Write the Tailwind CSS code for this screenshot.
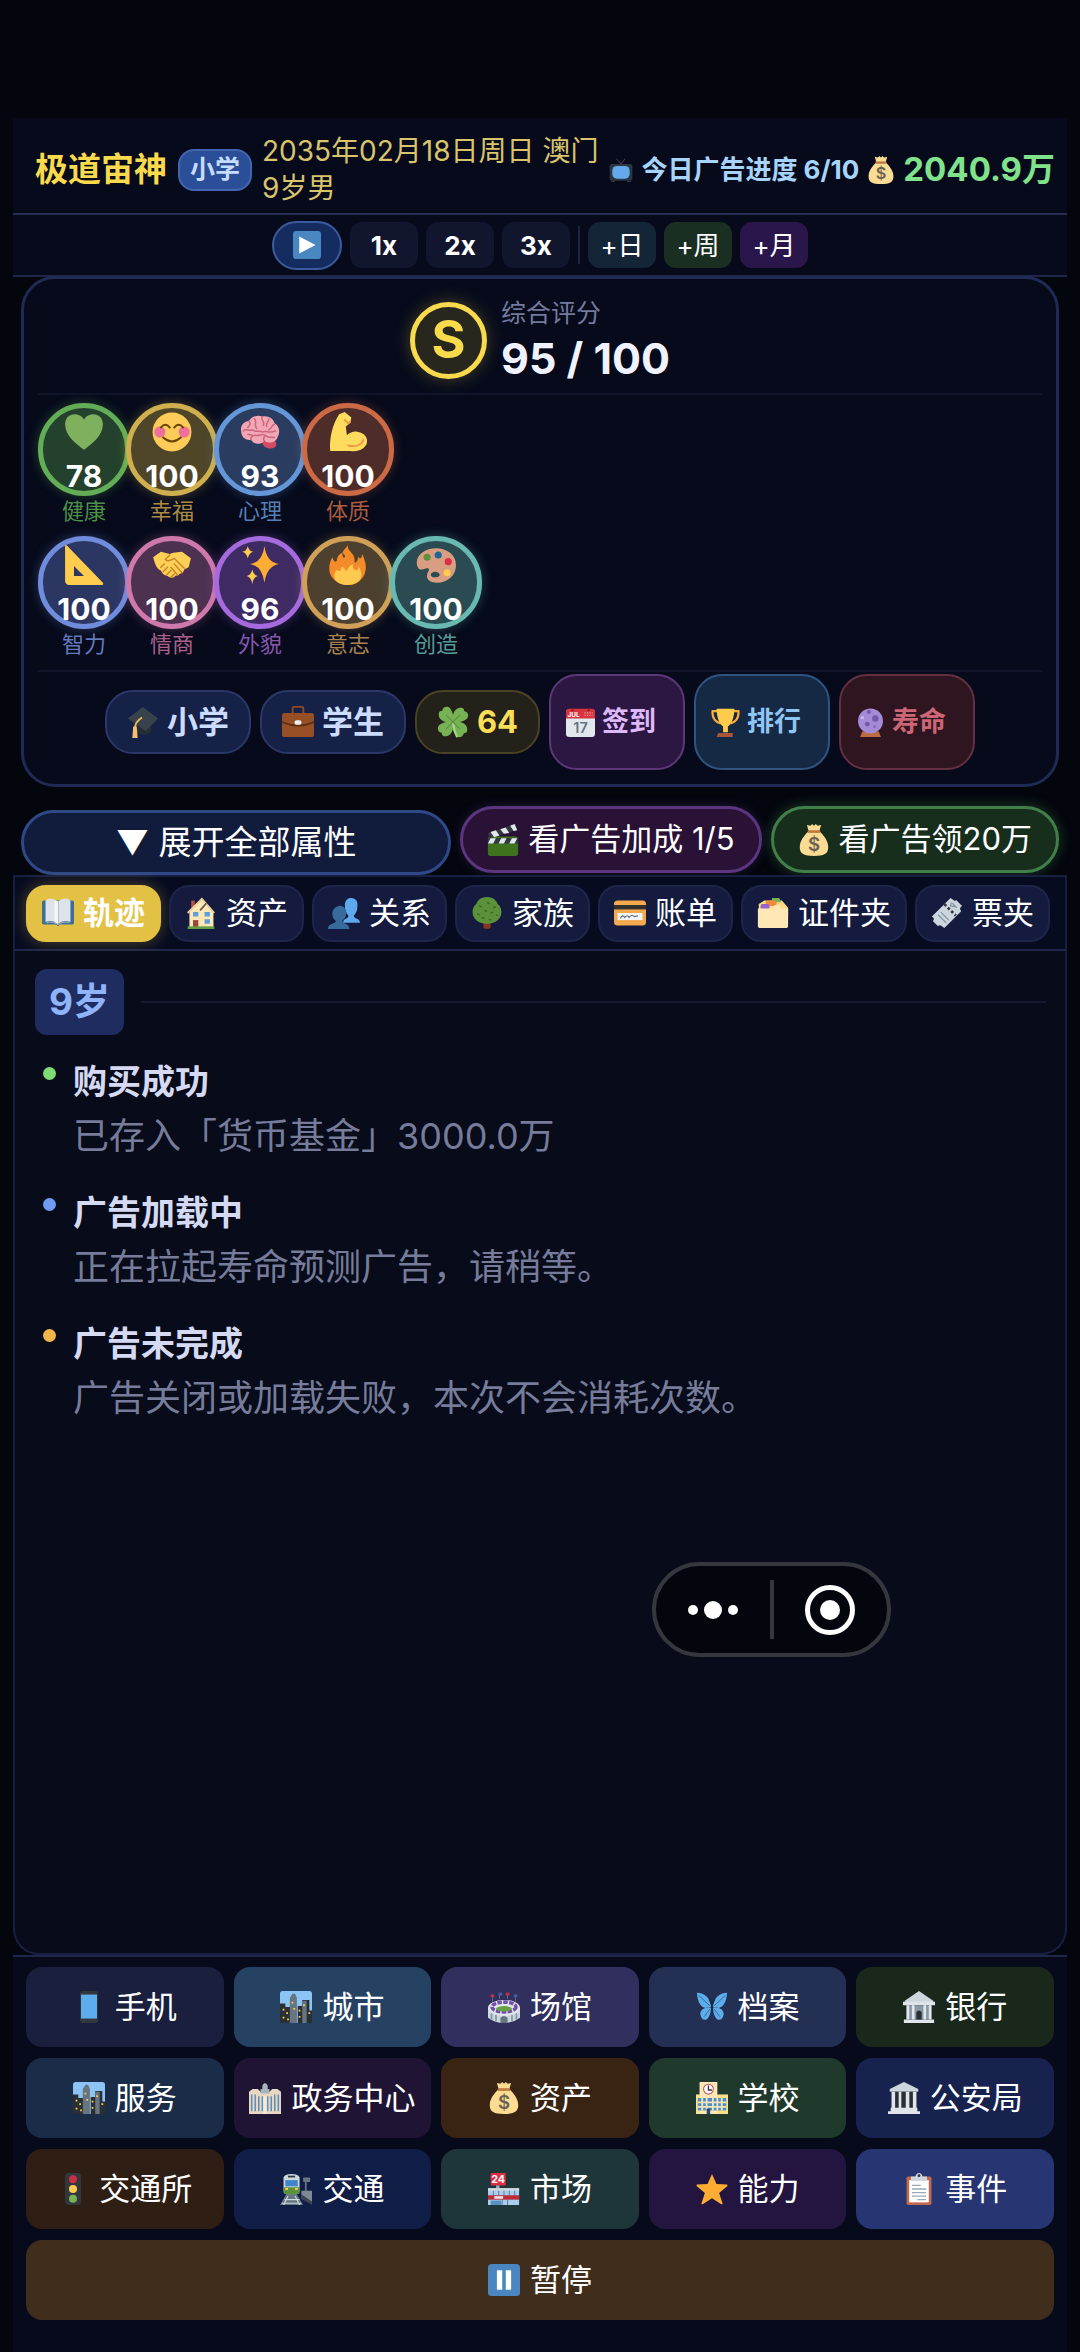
<!DOCTYPE html>
<html lang="zh-CN">
<head>
    <meta charset="UTF-8">
    <meta name="viewport" content="width=device-width, initial-scale=1.0">
    <title>人生模拟</title>
    <script src="https://cdn.jsdelivr.net/npm/@tailwindcss/browser@4"></script>
</head>
<body class="bg-[#03060d] text-white font-[Inter,'Noto_Sans_CJK_SC',sans-serif] whitespace-nowrap">

    <!-- icon sprites -->
    <svg class="hidden" xmlns="http://www.w3.org/2000/svg">
        <symbol id="i-play" viewBox="0 0 36 36"><rect width="36" height="36" rx="4" fill="#4a86c0"/><path d="M8 7v22l21-11z" fill="#fff"/></symbol>
        <symbol id="i-pause" viewBox="0 0 36 36"><rect width="36" height="36" rx="4" fill="#4a86c0"/><path d="M10 7h6v22h-6zM20 7h6v22h-6z" fill="#fff"/></symbol>
        <symbol id="i-tv" viewBox="0 0 36 36"><path d="M11 1l7 8 6-8" fill="none" stroke="#4a4350" stroke-width="1.5"/><rect x="1" y="9" width="34" height="25" rx="3" fill="#2b3640"/><path d="M3 34h6v2H3zM27 34h6v2h-6z" fill="#2b3640"/><rect x="5" y="12" width="26" height="19" rx="7" fill="#64a9ec"/></symbol>
        <symbol id="i-money" viewBox="0 0 36 36"><path d="M12 8L10 1l4 1 2-2 2 2 2-2 2 2 4-1-2 7c5 5 10 11 10 18 0 8-5 10-16 10S2 34 2 26C2 19 7 13 12 8z" fill="#fbdc92"/><path d="M11 7h14v3H11z" fill="#c07a3e"/><text x="18" y="30" text-anchor="middle" font-size="21" font-weight="600" fill="#6b6153">$</text></symbol>
        <symbol id="i-heart" viewBox="0 0 36 36"><path d="M18 34C10 28 1 21 1 11 1 5 5 2 9.500 2c4 0 7 2 8.500 5 1.500-3 4.500-5 8.500-5C31 2 35 5 35 11c0 10-9 17-17 23z" fill="#7fb05e"/></symbol>
        <symbol id="i-smile" viewBox="0 0 36 36"><circle cx="18" cy="18" r="17.500" fill="#fdcb58"/><circle cx="7" cy="18" r="5" fill="#ee6f9c"/><circle cx="29" cy="18" r="5" fill="#ee6f9c"/><path d="M8 14q4-5 8 0M20 14q4-5 8 0M10 23q8 7 16 0" fill="none" stroke="#664500" stroke-width="1.800" stroke-linecap="round"/></symbol>
        <symbol id="i-brain" viewBox="0 0 36 36"><path d="M20 27c0 5 8 8 12 4 2-2 0-6-3-6z" fill="#d34a62"/><path d="M1 17C0 11 5 8 8 8c3-5 9-5 12-4 6-1 10 2 11 6 5 3 5 9 3 12-1 5-7 7-12 4-4 4-10 3-12-1-5 1-9-3-9-8z" fill="#f3a6b4"/><path d="M8 8c2 2 1 4-1 6M13 6c3 3-1 5 2 9M20 4c-2 4 3 4 1 8M26 6c0 3-3 4-2 7M31 11c-3 1-2 4-5 5M3 17c3-3 5 1 8-1 3 3 6 0 9 2 4-2 6 2 12-1M10 25c-1-3 2-4 4-4 4 1 5-2 9 0 2 3 5 1 8 2M7 20c2 1 3 0 4 1M22 26c-2-2 0-4 1-5" fill="none" stroke="#c9667c" stroke-width="1.300" stroke-linecap="round"/></symbol>
        <symbol id="i-muscle" viewBox="0 0 36 36"><path d="M10 2l5-2 6 5-1 5-4 3 1 8c3-3 7-4 10-3 6 1 9 5 8 10-2 6-8 8-15 7H2C1 24 4 11 10 2z" fill="#ffdc5d"/><path d="M18 30c6 2 12 0 14-5M15 7l3 3 2-1" fill="none" stroke="#ef9645" stroke-width="1.600" stroke-linecap="round"/></symbol>
        <symbol id="i-ruler" viewBox="0 0 36 36"><path fill-rule="evenodd" d="M1 1q0-2 2 0l32 33q1 2-1 2H5q-4 0-4-4zM9 19v9h9z" fill="#ffcc4d"/></symbol>
        <symbol id="i-shake" viewBox="0 0 36 36"><path d="M1 11l7-5 8 2 3-1 8-1 8 6-2 8-4 2c-1 4-4 3-5 5-2 1-3 0-4 2-3 1-5 0-6-1-4-1-5-3-6-5-4-2-5-5-7-12z" fill="#ffcf56"/><path d="M16 9l-4 4c3 3 6 0 8-1l9 9M8 20l3-3M10 24l4-4M13 27l4-4M17 29l3-3M20 17l7 8M17 20l6 7" fill="none" stroke="#c7862c" stroke-width="1.300" stroke-linecap="round"/></symbol>
        <symbol id="i-spark" viewBox="0 0 36 36"><path d="M22 1q2 15 13 16-11 2-13 17-2-15-13-17Q20 16 22 1z" fill="#ffac33"/><path d="M7 1q1 5 5 5-4 1-5 6Q6 7 2 6q4 0 5-5zM11 22q1 5 5 6-4 1-5 7-1-6-5-7 4-1 5-6z" fill="#ffcc4d"/></symbol>
        <symbol id="i-fire" viewBox="0 0 36 36"><path d="M13 7c1-3 4-5 5-7-1 7 7 6 6 16 3-1 3-4 3-6 1 3 3 3 4-2 3 8 4 12 2 18-3 7-9 10-15 10S5 33 2 26C0 20 2 14 4 11c1 4 3 5 4 3 0-3 2-6 5-7 0 4 1 5 2 4 1-1 0-2-2-4z" fill="#f48b2b"/><path d="M12 20c3-1 4 5 5 3 1-3 3-5 6-6-2 4 1 5 3 6 2-1 1-3 1-4 7 9 1 17-9 17S2 29 8 22c2 3 4 1 4-2z" fill="#fdc94e"/></symbol>
        <symbol id="i-palette" viewBox="0 0 36 36"><path fill-rule="evenodd" d="M18 3c10 0 18 6 18 15 0 10-8 16-17 16-6 0-10-3-9-7 0-3 3-4 1-6-3-1-6 3-9 0C-3 11 7 3 18 3zM17 24c-6 1-4 6 1 5 5 0 4-5-1-5z" fill="#d99e82"/><circle cx="10" cy="11" r="3.200" fill="#5c913b"/><circle cx="20" cy="9" r="3.200" fill="#226699"/><circle cx="29" cy="15" r="3.200" fill="#dd2e44"/><circle cx="28" cy="25" r="3.200" fill="#ffcc4d"/></symbol>
        <symbol id="i-grad" viewBox="0 0 36 36"><path d="M8 18v10c5 5 14 6 19 1V17z" fill="#252e33"/><path d="M18 1l17 13-14 14L1 14z" fill="#37434a"/><path d="M17 13c-5 3-8 6-8 12" fill="none" stroke="#f6b75e" stroke-width="2"/><path d="M7 23h4l1 13H6z" fill="#f9bf70"/></symbol>
        <symbol id="i-case" viewBox="0 0 36 36"><path d="M12 9V3q0-2 2-2h8q2 0 2 2v6" fill="none" stroke="#8a4b25" stroke-width="2.200"/><rect y="8" width="36" height="27" rx="3" fill="#974f25"/><path d="M0 18q18 8 36 0" fill="none" stroke="#5d2e14" stroke-width="2"/><rect x="14" y="16" width="8" height="5" rx="2.500" fill="#eef1f3"/></symbol>
        <symbol id="i-clover" viewBox="0 0 36 36"><g fill="#77b255"><path id="lf" d="M18 18C9 20 1 15 2 9c0-4 3-3 4-4 1-5 7-5 9-2 3 4 4 9 3 15z"/><use href="#lf" transform="rotate(90 18 18)"/><use href="#lf" transform="rotate(180 18 18)"/><use href="#lf" transform="rotate(270 18 18)"/></g><path d="M18 18c1 6 1 11 5 17" fill="none" stroke="#a6d388" stroke-width="2.500"/><path d="M10 10l16 16M26 10L10 26" stroke="#5c9140" stroke-width="1.200"/></symbol>
        <symbol id="i-cal" viewBox="0 0 36 36"><rect y="2" width="36" height="34" rx="4" fill="#e1e8ed"/><path d="M0 13V5q0-4 4-4h28q4 0 4 4v8z" fill="#d8343f"/><text x="2" y="11" font-size="8" font-weight="700" fill="#fff">JUL</text><path d="M23 6h10M23 9h10" stroke="#f7a0a6" stroke-dasharray="1.500 1.500" stroke-width="1.500"/><path d="M8 0v4M28 0v4" stroke="#8c1f27" stroke-width="2"/><text x="18" y="31" text-anchor="middle" font-size="18" font-weight="600" fill="#66757f">17</text></symbol>
        <symbol id="i-cup" viewBox="0 0 36 36"><path d="M9 4H2c-1 9 4 14 10 15M27 4h7c1 9-4 14-10 15" fill="none" stroke="#ffac33" stroke-width="2.800"/><path d="M7 1h22c0 10-3 19-8 22v7h-6v-7C10 20 7 11 7 1z" fill="#ffcc4d"/><path d="M9 31h18v5H7z" fill="#a8553a"/></symbol>
        <symbol id="i-orb" viewBox="0 0 36 36"><path d="M8 29h20l3 7H5z" fill="#bd6a41"/><circle cx="18" cy="16" r="15.500" fill="#a58ad8"/><circle cx="24" cy="13" r="4" fill="#7459ab"/><circle cx="14" cy="20" r="3" fill="#7459ab"/><circle cx="16" cy="5" r="2.500" fill="#7459ab"/><circle cx="23" cy="23" r="2" fill="#8a6fc2"/><circle cx="8" cy="12" r="2" fill="#cbb8ef"/></symbol>
        <symbol id="i-clap" viewBox="0 0 36 36"><rect x="1" y="14" width="34" height="22" rx="3" fill="#3e721d"/><path d="M1 16h34v6H1z" fill="#31373d"/><path d="M1 10L32 0l2 7L3 16z" fill="#31373d"/><path d="M4 9l6-2 4 6-6 2zM15 6l6-2 4 6-6 1zM26 2l5-2 3 7-4 1zM4 16h6l-3 6H1zM16 16h6l-3 6h-6zM28 16h6l-3 6h-6z" fill="#e1e8ed"/></symbol>
        <symbol id="i-book" viewBox="0 0 36 36"><path d="M0 6q0-2 2-2h32q2 0 2 2v23q0 2-2 2H20l-2 2-2-2H2q-2 0-2-2z" fill="#3b6f96"/><path d="M18 5Q10-1 4 4v24q8-3 14 2 6-5 14-2V4q-6-5-14 1z" fill="#dde3e8"/><path d="M18 5v25M5 29q7-2 13 2 6-4 13-2" fill="none" stroke="#99a5b0" stroke-width="1.300"/><path d="M14 4q3 0 4 1v25q-2-1-4-2z" fill="#f3f5f7"/></symbol>
        <symbol id="i-house" viewBox="0 0 36 36"><path d="M7 4h4v10H7z" fill="#b4533f"/><path d="M5 16L19 2l13 14v18H5z" fill="#ffe8b6"/><path d="M3 18L19 2l14 16" fill="none" stroke="#e7cf9c" stroke-width="2"/><path d="M17 15l7-8" stroke="#66584a" stroke-width="2"/><path d="M9 17h6v5H9zM22 17h6v5h-6zM22 25h6v5h-6z" fill="#5c9fdc"/><path d="M9 26h6v8H9z" fill="#9c4637"/><path d="M3 33h30v3H3z" fill="#669e45"/></symbol>
        <symbol id="i-users" viewBox="0 0 36 36"><path d="M17 29c0-6 6-4 6-8-3-3-4-7-4-12 0-6 4-8 7-8 6 0 8 5 7 10 0 4-1 7-4 10 0 4 7 2 7 8z" fill="#5ea9ee"/><path d="M0 36c0-7 8-5 9-9-6-4-6-15 3-17 10-1 11 12 4 17 1 4 8 2 8 9z" fill="#366b9c"/></symbol>
        <symbol id="i-tree" viewBox="0 0 36 36"><path d="M14 27h8v8q-4 2-8 0z" fill="#8a3426"/><path d="M18 0c8 0 11 5 12 8 8 6 5 22-12 22S-2 14 6 8c1-3 4-8 12-8z" fill="#5c913b"/><path d="M9 10l3 1M18 6l3 2M25 12l3-1M7 19l3 1M15 15l3 1M22 18l3-1M12 24l3-1M20 25l3 1M28 20l2 1" stroke="#3c6b24" stroke-width="1.700"/></symbol>
        <symbol id="i-card" viewBox="0 0 36 36"><rect y="4" width="36" height="28" rx="4" fill="#f4a94f"/><path d="M0 9h36v5H0z" fill="#33302e"/><path d="M4 18h28v8H4z" fill="#f2f4f5"/><path d="M7 24q3-5 5-1 3-4 5 0 3-4 6-1l4-1" fill="none" stroke="#5f6d78" stroke-width="1.200"/></symbol>
        <symbol id="i-files" viewBox="0 0 36 36"><path d="M2 8l6-4h20l7 8v10H2z" fill="#ffd983"/><path d="M17 1h8l2 5H16z" fill="#77b255"/><rect x="10" y="4" width="12" height="6" rx="2" fill="#ef8b3e"/><rect x="4" y="8" width="10" height="6" rx="2" fill="#9266cc"/><path d="M1 13h16l3-4h5l2 4h8v20q0 2-2 2H3q-2 0-2-2z" fill="#ffe8b6"/></symbol>
        <symbol id="i-ticket" viewBox="0 0 36 36"><path d="M1 22L22 1l4 3q2 1 2-1l7 7q-4 2-1 6L15 35l-4-3q-2-1-3 1l-6-6q3-2-1-5z" fill="#ccd6dd"/><path d="M15 8l13 13" stroke="#31373d" stroke-width="3" stroke-dasharray="3 2.500"/><path d="M8 20l9 9M11 17l9 9M24 7l5 5M23 6l-1 4 5 1" stroke="#8899a6" stroke-width="1.500" fill="none"/></symbol>
        <symbol id="i-phone" viewBox="0 0 36 36"><rect x="8" y="0" width="20" height="36" rx="2.500" fill="#31373d"/><path d="M9 4h18v27H9z" fill="#5dadec"/></symbol>
        <symbol id="i-city" viewBox="0 0 36 36"><rect width="36" height="36" rx="3" fill="#8cc4f5"/><path d="M0 14h6v4h6v18H0zM20 17h5v-7h8v12h3v14H20z" fill="#292f33"/><path d="M11 8l3-5h3l2 5v28h-8zM25 11h5v25h-5z" fill="#66757f"/><path d="M3 20h2v2H3zM7 24h2v2H7zM3 29h2v2H3zM8 31h2v2H8zM21 21h2v2h-2zM21 28h2v2h-2zM32 24h2v2h-2zM13 12h2v2h-2zM15 19h2v2h-2zM26 15h2v2h-2z" fill="#ffcc4d"/></symbol>
        <symbol id="i-stadium" viewBox="0 0 36 36"><path d="M5 4v8M13 2v7M22 2v7M31 4v8" stroke="#66757f" stroke-width="1"/><path d="M3 4h4v3H3zM20 2h4v3h-4z" fill="#be3146"/><path d="M12 2h4v3h-4zM29 4h4v3h-4z" fill="#3d5fa8"/><path d="M0 19v11q8 6 18 6t18-6V19z" fill="#ccd6dd"/><ellipse cx="18" cy="19" rx="18" ry="9" fill="#e1e8ed"/><ellipse cx="18" cy="18" rx="13.500" ry="5.500" fill="none" stroke="#744eaa" stroke-width="4" stroke-dasharray="5 1.500"/><ellipse cx="18" cy="20" rx="9" ry="3" fill="#67a044"/><path d="M4 25v7M9 27v7M27 27v7M32 25v7" stroke="#8899a6" stroke-width="2"/><path d="M14 36v-6q4-4 8 0v6z" fill="#66757f"/></symbol>
        <symbol id="i-fly" viewBox="0 0 36 36"><path d="M17 18C8 22 2 16 1 2c9 0 15 6 16 16zM19 18c9 4 15-2 16-16-9 0-15 6-16 16zM17 19c-8-2-13 3-12 8 2 9 11 7 12-8zM19 19c8-2 13 3 12 8-2 9-11 7-12-8z" fill="#5dadec"/><path d="M3 5l13 12M33 5L20 17M9 29l7-9M27 29l-7-9" stroke="#2a6797" stroke-width="1"/><path d="M15 9l3 7 3-7M18 15v9" stroke="#20262b" stroke-width="1.400" fill="none"/></symbol>
        <symbol id="i-bank" viewBox="0 0 36 36"><path d="M18 0l16 11v4H2v-4z" fill="#ccd6dd"/><path d="M0 12h36v4H0zM1 32h34v4H1z" fill="#dfe5ea"/><path d="M4 16h28v16H4z" fill="#8a99a6"/><path d="M4 16h3v16H4zM10 16h3v16h-3zM23 16h3v16h-3zM29 16h3v16h-3z" fill="#e1e8ed"/><path d="M15 32v-8q3-4 6 0v8z" fill="#292f33"/></symbol>
        <symbol id="i-court" viewBox="0 0 36 36"><path d="M18 0l16 8v3H2V8z" fill="#ccd6dd"/><path d="M4 11h28v19H4z" fill="#292f33"/><path d="M4 11h4v19H4zM12 11h3v19h-3zM20 11h4v19h-4zM28 11h4v19h-4z" fill="#dfe5ea"/><path d="M3 29h30v4H3zM0 33h36v3H0z" fill="#dfe5ea"/></symbol>
        <symbol id="i-gov" viewBox="0 0 36 36"><path d="M0 11l4-3h6l3 3h10l3-3h6l4 3v25H0z" fill="#e8d8c3"/><path d="M13 8h2V4q3-6 6 0v4h2v5H13z" fill="#a9b4bd"/><path d="M3 14v19M7 14v19M11 16v17M15 16v17M21 16v17M25 16v17M29 14v19M33 14v19" stroke="#5c8fb8" stroke-width="1.700"/><path d="M16 16h4v20h-4z" fill="#f4eadb"/></symbol>
        <symbol id="i-school" viewBox="0 0 36 36"><path d="M0 14h36v22H0z" fill="#ffe08a"/><path d="M4 0h20v36H4z" fill="#ffe8b6"/><path d="M2 18h32v14H2z" fill="#4f8fc9"/><path d="M2 23h32M2 28h32M7 18v14M12 18v14M19 18v14M24 18v14M29 18v14" stroke="#f3e5bb" stroke-width="2"/><circle cx="14" cy="8" r="5.500" fill="#fff" stroke="#be5668" stroke-width="1.200"/><path d="M14 4v5h4" fill="none" stroke="#4b2e35" stroke-width="1.500"/><path d="M12 30h4v6h-4z" fill="#274c6d"/></symbol>
        <symbol id="i-light" viewBox="0 0 36 36"><rect x="9" width="18" height="36" rx="4" fill="#31373d"/><circle cx="18" cy="7" r="4.500" fill="#c93044"/><circle cx="18" cy="18" r="4.500" fill="#ffcc4d"/><circle cx="18" cy="29" r="4.500" fill="#77b255"/></symbol>
        <symbol id="i-train" viewBox="0 0 36 36"><path d="M29 9v13" stroke="#66757f" stroke-width="2"/><rect x="26" y="5" width="8" height="5" rx="1" fill="#66757f"/><path d="M24 20h12v14L24 29z" fill="#7d8a95"/><path d="M24 24l12 8v4L24 29z" fill="#3b454c"/><path d="M7 24L0 36h26l-7-12z" fill="#66757f"/><path d="M5 30h17M2 34h22M9 26l-5 10M17 26l5 10" stroke="#ccd6dd" stroke-width="1.300"/><path d="M4 5q1-4 9-4t9 4v15q0 4-4 4H8q-4 0-4-4z" fill="#ccd6dd"/><path d="M6 8h14v7H6z" fill="#3f86c8"/><path d="M4 16h18v5q0 3-4 3H8q-4 0-4-3z" fill="#5c913b"/><path d="M6 17h3v2H6zM17 17h3v2h-3z" fill="#ffcc4d"/><path d="M9 3h8v2H9z" fill="#31373d"/></symbol>
        <symbol id="i-store" viewBox="0 0 36 36"><rect x="3" width="17" height="14" rx="1" fill="#dd2e44"/><text x="11.500" y="11.500" text-anchor="middle" font-size="12" font-weight="700" fill="#fff">24</text><path d="M9 14h4v4H9z" fill="#99aab5"/><path d="M0 17h35v19H0z" fill="#a9cdeb"/><path d="M0 17h35v3H0z" fill="#ccd6dd"/><path d="M6 20v5M12 20v5M18 20v5M24 20v5M30 20v5M16 30v6M22 30v6" stroke="#5d83a6" stroke-width="1.200"/><path d="M0 25h35v5H0z" fill="#be2b3e"/><path d="M7 26h10v3H7z" fill="#f2dfe1"/><path d="M3 31h12v5H3z" fill="#5c8fc0"/></symbol>
        <symbol id="i-star" viewBox="0 0 36 36"><path d="M18 1l5 11.500 12 .5q1 1 0 2l-9 7.500 4 12q-1 1-2 0.500L18 28.500 8 35q-1 .5-2-.5l4-12L1 15q-1-1 0-2l12-.5z" fill="#ffac33"/></symbol>
        <symbol id="i-clip" viewBox="0 0 36 36"><rect x="4" y="4" width="28" height="32" rx="2" fill="#c1694f"/><path d="M7 8h22v25H7z" fill="#fff"/><path d="M9 4h5q1-4 4-4t4 4h5v5H9z" fill="#ccd6dd"/><circle cx="18" cy="3" r="1.600" fill="#31373d"/><path d="M10 14h10M10 18h16M10 22h16M10 26h16M16 30h10" stroke="#99a9b5" stroke-width="1.500"/></symbol>
    </svg>

    <div class="min-h-screen flex flex-col px-[13px] pt-[118px]">

        <!-- status bar -->
        <header class="h-[97px] shrink-0 flex items-center bg-[#070a1b] border-b-2 border-[#272c50] pl-[22px] pr-3 pt-2">
            <h1 class="text-[33px] font-bold text-[#f8da4c]">极道宙神</h1>
            <span class="ml-[11px] h-[42px] px-[10px] flex items-center rounded-2xl border-2 border-[#4465b0] bg-[#2b4e98] text-[25px] font-bold text-[#c5dcff]">小学</span>
            <p class="ml-[10px] flex-1 text-[28px] leading-[37px] text-[#d9c46c]">2035年02月18日周日 澳门<br>9岁男</p>
            <svg class="size-6"><use href="#i-tv"/></svg>
            <span class="ml-2 text-[26px] font-bold text-[#a6d4fa]">今日广告进度 6/10</span>
            <svg class="ml-2 size-7"><use href="#i-money"/></svg>
            <span class="ml-2 text-[33px] font-bold text-[#80e38c]">2040.9万</span>
        </header>

        <!-- speed controls -->
        <div class="h-[62px] -mb-px shrink-0 flex items-center justify-center gap-2 bg-[#070a1b] border-b-2 border-[#20264a] text-[26px]">
            <button aria-label="播放" class="w-[70px] h-[49px] flex items-center justify-center rounded-full border-2 border-[#3a5c9c] bg-[#152c60]"><svg class="size-7"><use href="#i-play"/></svg></button>
            <button class="w-[68px] h-[46px] rounded-xl bg-[#11152d] font-bold">1x</button>
            <button class="w-[68px] h-[46px] rounded-xl bg-[#11152d] font-bold">2x</button>
            <button class="w-[68px] h-[46px] rounded-xl bg-[#11152d] font-bold">3x</button>
            <span class="w-[2px] h-[38px] bg-[#1e2440]"></span>
            <button class="w-[68px] h-[46px] rounded-xl bg-[#142538]">+日</button>
            <button class="w-[68px] h-[46px] rounded-xl bg-[#1a2f22]">+周</button>
            <button class="w-[68px] h-[46px] rounded-xl bg-[#2a164a]">+月</button>
        </div>

        <!-- attributes -->
        <section class="mx-2 rounded-[34px] border-[3px] border-[#1f2a56] bg-[#060a1b] px-[14px] pt-4 pb-[14px]">
            <div class="flex items-center justify-center gap-[14px] pb-2 border-b-2 border-[#10152a]">
                <div class="size-[77px] rounded-full border-[5px] border-[#f8da4c] bg-[#28271e] shadow-[0_0_18px_#f8da4c44] flex items-center justify-center text-[52px] leading-none font-bold text-[#f8da4c]">S</div>
                <div>
                    <div class="text-[25px] leading-9 text-[#747a9c]">综合评分</div>
                    <div class="text-[43px] leading-[54px] font-bold text-[#f0f3ff]">95 / 100</div>
                </div>
            </div>
            <ul class="mt-2 flex -space-x-1 text-[22px] leading-[30px]">
                <li class="flex flex-col items-center text-[#4b9148]"><div class="w-[92px] h-[93px] rounded-full border-[5px] border-[#62ad55] bg-[#23412c] shadow-[0_0_12px_#62ad5555] flex flex-col items-center gap-[9px] pt-1"><svg class="size-10 shrink-0"><use href="#i-heart"/></svg><b class="text-[30px] text-white">78</b></div>健康</li>
                <li class="flex flex-col items-center text-[#a98c42]"><div class="w-[92px] h-[93px] rounded-full border-[5px] border-[#d0b04e] bg-[#4f4529] shadow-[0_0_12px_#d0b04e55] flex flex-col items-center gap-[9px] pt-1"><svg class="size-10 shrink-0"><use href="#i-smile"/></svg><b class="text-[30px] text-white">100</b></div>幸福</li>
                <li class="flex flex-col items-center text-[#5580b4]"><div class="w-[92px] h-[93px] rounded-full border-[5px] border-[#6496d8] bg-[#2a3d61] shadow-[0_0_12px_#6496d855] flex flex-col items-center gap-[9px] pt-1"><svg class="size-10 shrink-0"><use href="#i-brain"/></svg><b class="text-[30px] text-white">93</b></div>心理</li>
                <li class="flex flex-col items-center text-[#a95c40]"><div class="w-[92px] h-[93px] rounded-full border-[5px] border-[#cb6a45] bg-[#4e2c2a] shadow-[0_0_12px_#cb6a4555] flex flex-col items-center gap-[9px] pt-1"><svg class="size-10 shrink-0"><use href="#i-muscle"/></svg><b class="text-[30px] text-white">100</b></div>体质</li>
            </ul>
            <ul class="mt-[10px] pb-[11px] flex -space-x-1 text-[22px] leading-[30px] border-b-2 border-[#10152a]">
                <li class="flex flex-col items-center text-[#6478bc]"><div class="w-[92px] h-[93px] rounded-full border-[5px] border-[#708cdc] bg-[#2b3762] shadow-[0_0_12px_#708cdc55] flex flex-col items-center gap-[9px] pt-1"><svg class="size-10 shrink-0"><use href="#i-ruler"/></svg><b class="text-[30px] text-white">100</b></div>智力</li>
                <li class="flex flex-col items-center text-[#aa608c]"><div class="w-[92px] h-[93px] rounded-full border-[5px] border-[#cf78ac] bg-[#4d3151] shadow-[0_0_12px_#cf78ac55] flex flex-col items-center gap-[9px] pt-1"><svg class="size-10 shrink-0"><use href="#i-shake"/></svg><b class="text-[30px] text-white">100</b></div>情商</li>
                <li class="flex flex-col items-center text-[#8656ac]"><div class="w-[92px] h-[93px] rounded-full border-[5px] border-[#a56add] bg-[#3e2b63] shadow-[0_0_12px_#a56add55] flex flex-col items-center gap-[9px] pt-1"><svg class="size-10 shrink-0"><use href="#i-spark"/></svg><b class="text-[30px] text-white">96</b></div>外貌</li>
                <li class="flex flex-col items-center text-[#a98250]"><div class="w-[92px] h-[93px] rounded-full border-[5px] border-[#d0a058] bg-[#4d402f] shadow-[0_0_12px_#d0a05855] flex flex-col items-center gap-[9px] pt-1"><svg class="size-10 shrink-0"><use href="#i-fire"/></svg><b class="text-[30px] text-white">100</b></div>意志</li>
                <li class="flex flex-col items-center text-[#559a94]"><div class="w-[92px] h-[93px] rounded-full border-[5px] border-[#68bab0] bg-[#2a4b52] shadow-[0_0_12px_#68bab055] flex flex-col items-center gap-[9px] pt-1"><svg class="size-10 shrink-0"><use href="#i-palette"/></svg><b class="text-[30px] text-white">100</b></div>创造</li>
            </ul>
            <div class="mt-[2px] flex items-center justify-center gap-[9px] font-bold">
                <span class="h-16 px-5 flex items-center gap-2 rounded-[28px] border-2 border-[#2b3768] bg-[#152147] text-[31px] text-[#ccdcff]"><svg class="size-8"><use href="#i-grad"/></svg>小学</span>
                <span class="h-16 px-5 flex items-center gap-2 rounded-[28px] border-2 border-[#2b3768] bg-[#152147] text-[31px] text-[#ccdcff]"><svg class="size-8"><use href="#i-case"/></svg>学生</span>
                <span class="h-16 px-5 flex items-center gap-2 rounded-[28px] border-2 border-[#494324] bg-[#232119] text-[31px] text-[#fade57]"><svg class="size-8"><use href="#i-clover"/></svg>64</span>
                <button class="h-24 pl-[15px] pr-[27px] flex items-center gap-[7px] rounded-[28px] border-2 border-[#5c3778] bg-[#2c1742] text-[27px] text-[#ddb9fa]"><svg class="size-[29px]"><use href="#i-cal"/></svg>签到</button>
                <button class="h-24 pl-[15px] pr-[27px] flex items-center gap-[7px] rounded-[28px] border-2 border-[#2f5480] bg-[#162944] text-[27px] text-[#8ec5f5]"><svg class="size-[29px]"><use href="#i-cup"/></svg>排行</button>
                <button class="h-24 pl-[15px] pr-[27px] flex items-center gap-[7px] rounded-[28px] border-2 border-[#633041] bg-[#2e151f] text-[27px] text-[#cc6676]"><svg class="size-[29px]"><use href="#i-orb"/></svg>寿命</button>
            </div>
        </section>

        <div class="mt-[19px] mx-2 h-[69px] shrink-0 flex gap-[9px] text-[31px]">
            <button class="flex-1 self-end h-[65px] rounded-[34px] border-[3px] border-[#2f4988] bg-[#111b3c] text-[33px]">▼ 展开全部属性</button>
            <button class="h-[67px] px-6 flex items-center gap-[9px] rounded-[34px] border-[3px] border-[#5b3580] bg-[#2a1136] shadow-[0_0_12px_#5b358055]"><svg class="size-8"><use href="#i-clap"/></svg>看广告加成 1/5</button>
            <button class="h-[67px] px-6 flex items-center gap-[9px] rounded-[34px] border-[3px] border-[#417f4a] bg-[#172e1d] shadow-[0_0_14px_#417f4a77]"><svg class="size-8"><use href="#i-money"/></svg>看广告领20万</button>
        </div>

        <!-- tabs -->
        <nav class="h-[76px] shrink-0 flex items-center justify-between pl-[11px] pr-[15px] bg-[#070b20] border-2 border-[#191f40] border-b-[#20264a] text-[31px]">
            <button class="h-[57px] px-[14px] flex items-center gap-[9px] rounded-[20px] border-2 border-[#e3c145] bg-[#e3c145] shadow-[0_0_16px_#e3c14555] font-bold"><svg class="size-8"><use href="#i-book"/></svg>轨迹</button>
            <button class="h-[57px] px-[14px] flex items-center gap-[9px] rounded-[20px] border-2 border-[#1d2549] bg-[#141b3f]"><svg class="size-8"><use href="#i-house"/></svg>资产</button>
            <button class="h-[57px] px-[14px] flex items-center gap-[9px] rounded-[20px] border-2 border-[#1d2549] bg-[#141b3f]"><svg class="size-8"><use href="#i-users"/></svg>关系</button>
            <button class="h-[57px] px-[14px] flex items-center gap-[9px] rounded-[20px] border-2 border-[#1d2549] bg-[#141b3f]"><svg class="size-8"><use href="#i-tree"/></svg>家族</button>
            <button class="h-[57px] px-[14px] flex items-center gap-[9px] rounded-[20px] border-2 border-[#1d2549] bg-[#141b3f]"><svg class="size-8"><use href="#i-card"/></svg>账单</button>
            <button class="h-[57px] px-[14px] flex items-center gap-[9px] rounded-[20px] border-2 border-[#1d2549] bg-[#141b3f]"><svg class="size-8"><use href="#i-files"/></svg>证件夹</button>
            <button class="h-[57px] px-[14px] flex items-center gap-[9px] rounded-[20px] border-2 border-[#1d2549] bg-[#141b3f]"><svg class="size-8"><use href="#i-ticket"/></svg>票夹</button>
        </nav>

        <!-- timeline -->
        <main class="flex-1 bg-[#070b1a] border-2 border-t-0 border-[#191f40] rounded-b-[26px] pl-5 pr-[19px] pt-[18px]">
            <div class="flex items-center gap-[17px]">
                <h2 class="h-[66px] px-[14px] flex items-center rounded-xl bg-[#1f2c60] text-[37px] font-bold text-[#8fb4fa]">9岁</h2>
                <span class="flex-1 h-[2px] bg-[#141930]"></span>
            </div>
            <ul class="mt-[19px] flex flex-col gap-[21px] pl-2">
                <li class="flex gap-[17px]">
                    <span class="mt-[13px] size-[13px] rounded-full bg-[#7cdb72]"></span>
                    <div><h3 class="text-[34px] leading-[55px] font-bold text-[#d5daf2]">购买成功</h3><p class="text-[36px] leading-[55px] text-[#767c99]">已存入「货币基金」3000.0万</p></div>
                </li>
                <li class="flex gap-[17px]">
                    <span class="mt-[13px] size-[13px] rounded-full bg-[#6f9bf2]"></span>
                    <div><h3 class="text-[34px] leading-[55px] font-bold text-[#d5daf2]">广告加载中</h3><p class="text-[36px] leading-[55px] text-[#767c99]">正在拉起寿命预测广告，请稍等。</p></div>
                </li>
                <li class="flex gap-[17px]">
                    <span class="mt-[13px] size-[13px] rounded-full bg-[#f5b649]"></span>
                    <div><h3 class="text-[34px] leading-[55px] font-bold text-[#d5daf2]">广告未完成</h3><p class="text-[36px] leading-[55px] text-[#767c99]">广告关闭或加载失败，本次不会消耗次数。</p></div>
                </li>
            </ul>
        </main>

        <!-- bottom menu -->
        <footer class="shrink-0 bg-[#070a1a] border-t-2 border-[#20264a] px-[13px] pt-[10px] pb-8 grid grid-cols-5 gap-x-[10px] gap-y-[11px] text-[31px]">
            <button class="h-20 rounded-2xl flex items-center justify-center gap-[10px] bg-[#1a1f3d]"><svg class="size-8"><use href="#i-phone"/></svg>手机</button>
            <button class="h-20 rounded-2xl flex items-center justify-center gap-[10px] bg-[#254263]"><svg class="size-8"><use href="#i-city"/></svg>城市</button>
            <button class="h-20 rounded-2xl flex items-center justify-center gap-[10px] bg-[#302f5d]"><svg class="size-8"><use href="#i-stadium"/></svg>场馆</button>
            <button class="h-20 rounded-2xl flex items-center justify-center gap-[10px] bg-[#233053]"><svg class="size-8"><use href="#i-fly"/></svg>档案</button>
            <button class="h-20 rounded-2xl flex items-center justify-center gap-[10px] bg-[#1a281b]"><svg class="size-8"><use href="#i-bank"/></svg>银行</button>
            <button class="h-20 rounded-2xl flex items-center justify-center gap-[10px] bg-[#1a2c48]"><svg class="size-8"><use href="#i-city"/></svg>服务</button>
            <button class="h-20 rounded-2xl flex items-center justify-center gap-[10px] bg-[#201434]"><svg class="size-8"><use href="#i-gov"/></svg>政务中心</button>
            <button class="h-20 rounded-2xl flex items-center justify-center gap-[10px] bg-[#392414]"><svg class="size-8"><use href="#i-money"/></svg>资产</button>
            <button class="h-20 rounded-2xl flex items-center justify-center gap-[10px] bg-[#1f3a2c]"><svg class="size-8"><use href="#i-school"/></svg>学校</button>
            <button class="h-20 rounded-2xl flex items-center justify-center gap-[10px] bg-[#17224f]"><svg class="size-8"><use href="#i-court"/></svg>公安局</button>
            <button class="h-20 rounded-2xl flex items-center justify-center gap-[10px] bg-[#2e1e13]"><svg class="size-8"><use href="#i-light"/></svg>交通所</button>
            <button class="h-20 rounded-2xl flex items-center justify-center gap-[10px] bg-[#0f1d47]"><svg class="size-8"><use href="#i-train"/></svg>交通</button>
            <button class="h-20 rounded-2xl flex items-center justify-center gap-[10px] bg-[#1e3539]"><svg class="size-8"><use href="#i-store"/></svg>市场</button>
            <button class="h-20 rounded-2xl flex items-center justify-center gap-[10px] bg-[#231540]"><svg class="size-8"><use href="#i-star"/></svg>能力</button>
            <button class="h-20 rounded-2xl flex items-center justify-center gap-[10px] bg-[#273673]"><svg class="size-8"><use href="#i-clip"/></svg>事件</button>
            <button class="h-20 col-span-5 rounded-2xl flex items-center justify-center gap-[10px] bg-[#412d1c]"><svg class="size-8"><use href="#i-pause"/></svg>暂停</button>
        </footer>
    </div>

    <!-- floating capsule -->
    <div class="fixed right-[189px] bottom-[695px] w-[239px] h-[95px] flex items-center rounded-full border-4 border-[#35373f] bg-[#03060d]">
        <button aria-label="更多" class="flex-1 h-full flex items-center justify-center gap-[6px]"><span class="size-[10px] rounded-full bg-white"></span><span class="size-[18px] rounded-full bg-white"></span><span class="size-[10px] rounded-full bg-white"></span></button>
        <span class="w-1 h-[59px] bg-[#35373f]"></span>
        <button aria-label="关闭" class="flex-1 h-full flex items-center justify-center"><span class="size-[50px] rounded-full border-[5px] border-white flex items-center justify-center"><span class="size-5 rounded-full bg-white"></span></span></button>
    </div>
</body>
</html>
